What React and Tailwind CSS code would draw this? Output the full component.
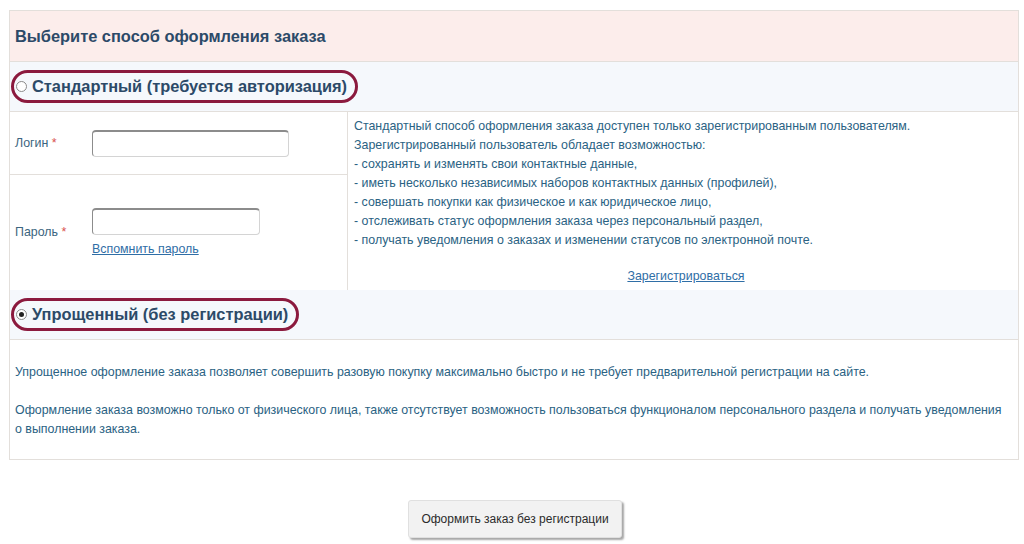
import { useState } from "react";

const perks = [
  "- сохранять и изменять свои контактные данные,",
  "- иметь несколько независимых наборов контактных данных (профилей),",
  "- совершать покупки как физическое и как юридическое лицо,",
  "- отслеживать статус оформления заказа через персональный раздел,",
  "- получать уведомления о заказах и изменении статусов по электронной почте."
];

function Radio({ checked }) {
  return (
    <span className="flex h-[11px] w-[11px] items-center justify-center rounded-full border border-[#8a8a8a] bg-white">
      {checked ? <span className="h-[5px] w-[5px] rounded-full bg-[#222]" /> : null}
    </span>
  );
}

function MethodBand({ label, checked, onClick, border }) {
  return (
    <div className={`flex h-[50px] items-center bg-[#f5f8fc] pl-px ${border}`}>
      <button
        type="button"
        onClick={onClick}
        className="flex h-[33px] items-center gap-[5px] rounded-full border-[3px] border-[#8b1a3e] pl-[2px] pr-[8px]"
      >
        <Radio checked={checked} />
        <span className="text-[16.4px] font-bold text-[#2c4a68]">{label}</span>
      </button>
    </div>
  );
}

function Field({ width }) {
  return (
    <input
      className={`h-[27px] ${width} rounded-[4px] border border-[#d4d4d4] border-l-[#8c8c8c] border-t-[#8c8c8c] border-t-2 bg-white px-1 text-[12px] outline-none`}
    />
  );
}

export default function App() {
  const [mode, setMode] = useState("quick");

  return (
    <div className="min-h-[544px] bg-white pt-[10px] font-['Liberation_Sans',Arial,sans-serif] text-[12.4px] text-[#2a6283]">
      <div className="ml-[9px] w-[1010px] border border-[#e3dfdb]">
        <div className="flex h-[51px] items-center border-b border-[#e3dfdb] bg-[#fcedeb] px-[5px]">
          <h1 className="text-[16.4px] font-bold text-[#2c4a68]">Выберите способ оформления заказа</h1>
        </div>

        <MethodBand
          label="Стандартный (требуется авторизация)"
          checked={mode === "standard"}
          onClick={() => setMode("standard")}
          border="border-b border-[#e3dfdb]"
        />

        <div className="flex">
          <div className="w-[338px] border-r border-[#e3dfdb]">
            <div className="flex h-[63px] items-center border-b border-[#e3dfdb] pl-[5px]">
              <span className="w-[77px] text-[#3b6580]">
                Логин <span className="text-[#d9534f]">*</span>
              </span>
              <Field width="w-[197px]" />
            </div>
            <div className="flex h-[115px] items-center pl-[5px]">
              <span className="w-[77px] text-[#3b6580]">
                Пароль <span className="text-[#d9534f]">*</span>
              </span>
              <div className="flex flex-col gap-[5px] pt-[1px]">
                <Field width="w-[168px]" />
                <a href="#" className="text-[#2f6ea6] underline">Вспомнить пароль</a>
              </div>
            </div>
          </div>
          <div className="flex flex-1 flex-col pl-[6px] pt-[5px]">
            <p className="leading-[19px]">
              Стандартный способ оформления заказа доступен только зарегистрированным пользователям.
            </p>
            <p className="leading-[19px]">Зарегистрированный пользователь обладает возможностью:</p>
            {perks.map((line) => (
              <p key={line} className="leading-[19px]">{line}</p>
            ))}
            <div className="mt-[17px] text-center">
              <a href="#" className="text-[#2f6ea6] underline">Зарегистрироваться</a>
            </div>
          </div>
        </div>

        <MethodBand
          label="Упрощенный (без регистрации)"
          checked={mode === "quick"}
          onClick={() => setMode("quick")}
          border="border-b border-[#e3dfdb]"
        />

        <div className="h-[119px] pl-[5px] pr-[12px] pt-[23px] leading-[19px]">
          <p>
            Упрощенное оформление заказа позволяет совершить разовую покупку максимально быстро и не требует предварительной регистрации на сайте.
          </p>
          <p className="mt-[19px]">
            Оформление заказа возможно только от физического лица, также отсутствует возможность пользоваться функционалом персонального раздела и получать уведомления о выполнении заказа.
          </p>
        </div>
      </div>

      <div className="mt-[40px] flex justify-center">
        <button
          type="button"
          className="ml-[6px] h-[38px] rounded-[3px] border border-[#e0e0e0] bg-[#f2f2f2] px-[12px] text-[12px] text-[#2b2b2b] shadow-[2px_2px_2px_rgba(0,0,0,0.35)]"
        >
          Оформить заказ без регистрации
        </button>
      </div>
    </div>
  );
}
